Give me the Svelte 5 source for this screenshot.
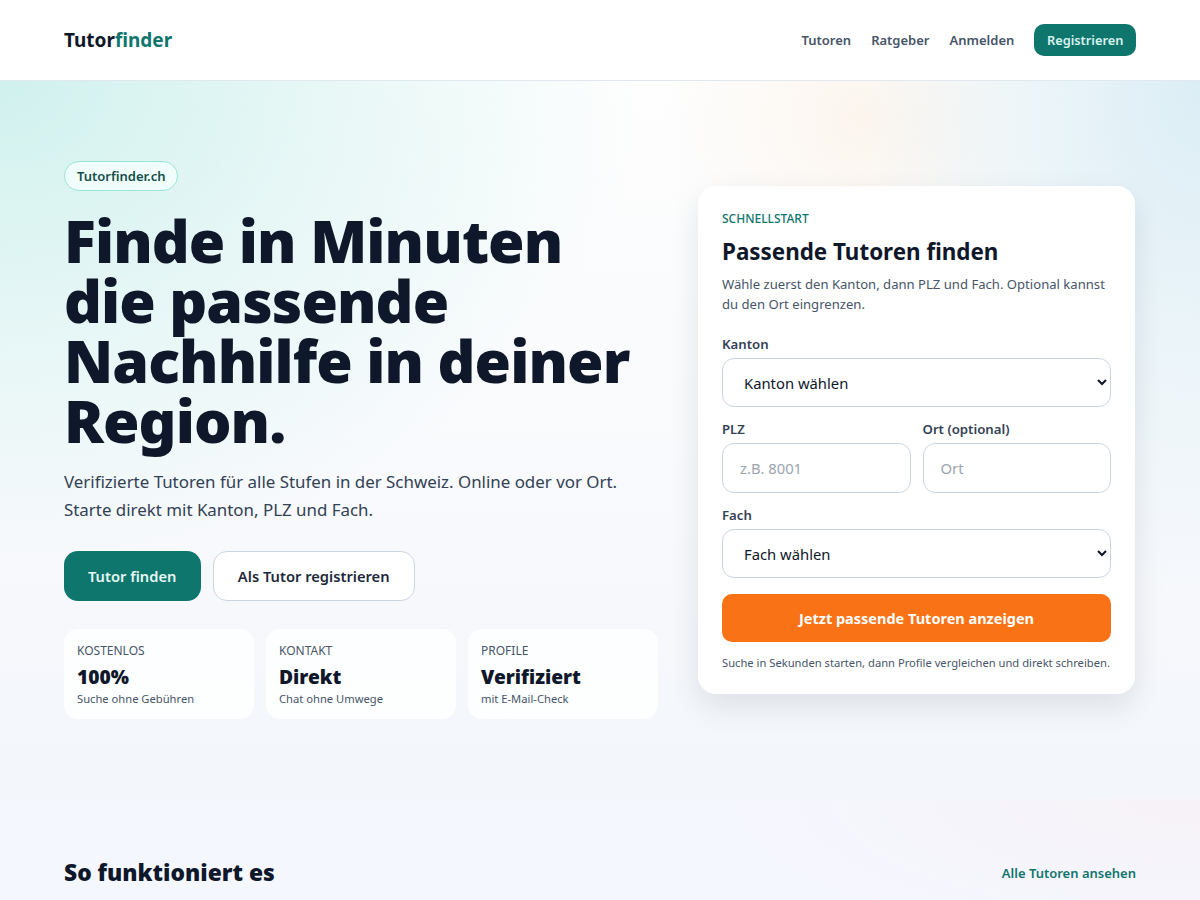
<script>
  const stats = [
    { label: 'KOSTENLOS', value: '100%', note: 'Suche ohne Gebühren' },
    { label: 'KONTAKT', value: 'Direkt', note: 'Chat ohne Umwege' },
    { label: 'PROFILE', value: 'Verifiziert', note: 'mit E-Mail-Check' }
  ];
</script>

<div class="page">
  <header class="topbar">
    <div class="wrap bar">
      <a class="logo" href="#top">Tutor<span>finder</span></a>
      <nav>
        <a href="#tutoren">Tutoren</a>
        <a href="#ratgeber">Ratgeber</a>
        <a href="#anmelden">Anmelden</a>
        <a class="reg" href="#registrieren">Registrieren</a>
      </nav>
    </div>
  </header>

  <section class="hero">
    <div class="wrap heroGrid">
      <div class="left">
        <span class="pill">Tutorfinder.ch</span>
        <h1>Finde in Minuten die passende Nachhilfe in deiner Region.</h1>
        <p class="lead">Verifizierte Tutoren für alle Stufen in der Schweiz. Online oder vor Ort. Starte direkt mit Kanton, PLZ und Fach.</p>
        <div class="actions">
          <a class="btn primary" href="#finden">Tutor finden</a>
          <a class="btn ghost" href="#werden">Als Tutor registrieren</a>
        </div>
        <div class="stats">
          {#each stats as s}
            <div class="stat">
              <div class="statLabel">{s.label}</div>
              <div class="statValue">{s.value}</div>
              <div class="statNote">{s.note}</div>
            </div>
          {/each}
        </div>
      </div>

      <form class="card" on:submit|preventDefault>
        <div class="eyebrow">SCHNELLSTART</div>
        <h2>Passende Tutoren finden</h2>
        <p class="intro">Wähle zuerst den Kanton, dann PLZ und Fach. Optional kannst du den Ort eingrenzen.</p>

        <label for="kanton">Kanton</label>
        <select id="kanton"><option>Kanton wählen</option></select>

        <div class="two">
          <div class="col">
            <label for="plz">PLZ</label>
            <input id="plz" type="text" placeholder="z.B. 8001" />
          </div>
          <div class="col">
            <label for="ort">Ort (optional)</label>
            <input id="ort" type="text" placeholder="Ort" />
          </div>
        </div>

        <label for="fach">Fach</label>
        <select id="fach"><option>Fach wählen</option></select>

        <button type="submit">Jetzt passende Tutoren anzeigen</button>
        <p class="hint">Suche in Sekunden starten, dann Profile vergleichen und direkt schreiben.</p>
      </form>
    </div>
  </section>

  <section class="how">
    <div class="wrap howHead">
      <h3>So funktioniert es</h3>
      <a href="#alle">Alle Tutoren ansehen</a>
    </div>
  </section>
</div>

<style>
  :global(body) {
    margin: 0;
    background: #f5f7fe;
    font-family: "Noto Sans", "Open Sans", sans-serif;
    color: #0f1a2e;
  }
  a { text-decoration: none; color: inherit; }
  .page { height: 900px; overflow: hidden; }
  .wrap { width: 1072px; margin: 0 auto; }

  .topbar { background: #fff; border-bottom: 1px solid #e2e8f0; height: 80px; }
  .bar { display: flex; align-items: center; justify-content: space-between; height: 80px; }
  .logo { font-size: 19px; font-weight: 700; color: #0f172a; }
  .logo span { color: #0f766e; }
  nav { display: flex; align-items: center; gap: 20px; font-size: 13px; font-weight: 600; color: #475569; }
  .reg { background: #0f766e; color: #d8f3ee; font-size: 12.8px; padding: 7px 12.6px; border-radius: 10px; }

  .hero {
    height: 718px;
    box-sizing: border-box;
    padding-top: 80px;
    background:
      radial-gradient(ellipse 640px 480px at 0 0, #d0f1ee 0, rgba(208, 241, 238, 0) 100%),
      radial-gradient(ellipse 340px 520px at 100% 0, #dbedf5 0, rgba(219, 237, 245, 0) 100%),
      radial-gradient(ellipse 200px 180px at 72% 5%, #fcf5ee 0, rgba(252, 245, 238, 0) 100%),
      linear-gradient(180deg, #fefefe 0, #f3f6fb 100%);
  }
  .heroGrid { display: grid; grid-template-columns: 594px 437px; gap: 40px; align-items: start; }

  .pill {
    display: inline-block;
    font-size: 13px;
    font-weight: 600;
    color: #134e4a;
    background: #f0fdfa;
    border: 1px solid #99e6d8;
    border-radius: 999px;
    padding: 5px 11px 5px 12px;
  }
  h1 { margin: 19px 0 0; font-size: 59px; line-height: 60px; font-weight: 900; letter-spacing: -0.9px; color: #0f172a; }
  .lead { margin: 18px 0 0; font-size: 16.9px; line-height: 28px; color: #334155; }

  .actions { display: flex; gap: 12px; margin-top: 27px; }
  .btn { display: flex; align-items: center; height: 50px; box-sizing: border-box; border-radius: 14px; font-size: 14.7px; font-weight: 600; }
  .primary { background: #0f766e; color: #e6f7f4; padding: 0 24.5px 0 24px; }
  .ghost { background: #fff; border: 1px solid #cbd5e1; color: #1e293b; padding: 0 24px; }

  .stats { display: grid; grid-template-columns: repeat(3, 1fr); gap: 12px; margin-top: 28px; }
  .stat { background: rgba(255, 255, 255, 0.8); border-radius: 14px; padding: 14px 13px; height: 90px; box-sizing: border-box; }
  .statLabel { font-size: 12px; line-height: 16px; color: #475569; }
  .statValue { margin-top: 5px; font-size: 19.2px; line-height: 26px; font-weight: 900; color: #0f172a; }
  .statNote { margin-top: 1px; font-size: 11.2px; line-height: 16px; color: #475569; }

  .card {
    margin-top: 25px;
    background: #fff;
    border-radius: 18px;
    padding: 25px 24px 24px;
    height: 508px;
    box-sizing: border-box;
    box-shadow: 0 12px 30px rgba(15, 23, 42, 0.1);
  }
  .eyebrow { font-size: 12px; line-height: 16px; font-weight: 500; color: #0f766e; }
  h2 { margin: 10px 0 0; font-size: 22.4px; line-height: 30px; font-weight: 700; color: #0f172a; }
  .intro { margin: 7px 0 0; font-size: 13.1px; line-height: 20px; color: #475569; }
  label { display: block; margin: 0 0 5px; font-size: 13.2px; line-height: 18px; font-weight: 600; color: #334155; }
  .intro + label { margin-top: 21px; }
  select, input {
    display: block;
    width: 100%;
    box-sizing: border-box;
    background: #fff;
    border: 1px solid #cbd5e1;
    border-radius: 12px;
    font: inherit;
    font-size: 14.8px;
    color: #0f172a;
    height: 49px;
    padding: 0 17px;
  }
  input { height: 50px; }
  input::placeholder { color: #9ca3af; opacity: 1; }
  .two { display: grid; grid-template-columns: 1fr 1fr; gap: 12px; margin-top: 13px; }
  .two + label { margin-top: 13px; }
  button {
    display: block;
    width: 100%;
    height: 48px;
    margin-top: 16px;
    background: #f97316;
    color: #fff;
    border: 0;
    border-radius: 10px;
    font: inherit;
    font-size: 14.5px;
    font-weight: 700;
  }
  .hint { margin: 13px 0 0; font-size: 11.2px; line-height: 16px; color: #475569; white-space: nowrap; }

  .how {
    height: 101px;
    box-sizing: border-box;
    padding-top: 59px;
    background: radial-gradient(ellipse 500px 160px at 100% 0, rgba(248, 240, 245, 0.7) 0, rgba(248, 240, 245, 0) 100%), #f5f7ff;
  }
  .howHead { display: flex; align-items: center; justify-content: space-between; }
  h3 { margin: 0; font-size: 22.8px; line-height: 30px; font-weight: 900; color: #0f172a; }
  .howHead a { font-size: 13px; font-weight: 600; color: #0f766e; }
</style>
